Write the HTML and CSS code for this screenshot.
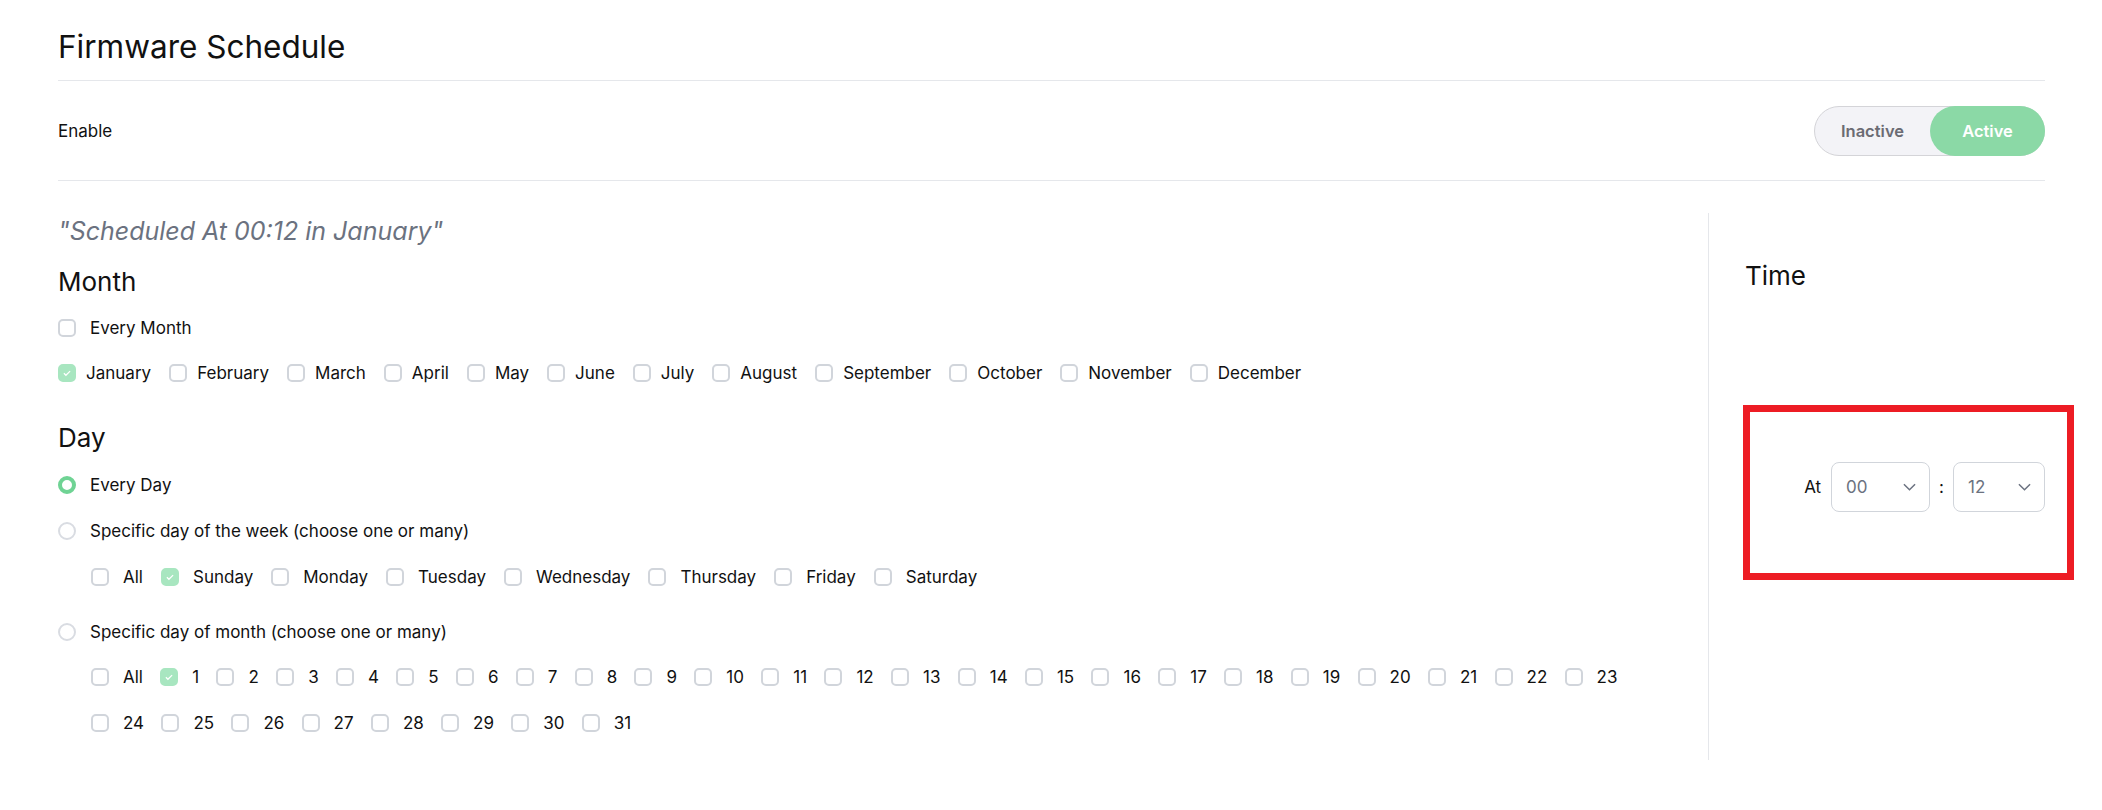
FILE: index.html
```html
<html lang="en">
    <head>
        <title>Firmware Schedule</title>
        <meta charset="UTF-8" />
        <link rel="stylesheet" href="styles.css">
    </head>

    <body>
        <div class="page">
            <header class="page-header">
                <h1>Firmware Schedule</h1>
            </header>

            <div class="enable-row">
                <span>Enable</span>
                <div class="toggle">
                    <span class="toggle-option">Inactive</span>
                    <span class="toggle-option active">Active</span>
                </div>
            </div>

            <div class="schedule">
                <div class="schedule-main">
                    <p class="summary">"Scheduled At 00:12 in January"</p>

                    <h2 class="section-title">Month</h2>
                    <div class="option-row">
                        <label class="check"><span class="box"></span>Every Month</label>
                    </div>
                    <div class="check-list months">
                        <label class="check checked"><span class="box"><svg viewBox="0 0 18 18"><path d="M5 9.3l2.6 2.6L13 6.6"/></svg></span>January</label>
                        <label class="check"><span class="box"></span>February</label>
                        <label class="check"><span class="box"></span>March</label>
                        <label class="check"><span class="box"></span>April</label>
                        <label class="check"><span class="box"></span>May</label>
                        <label class="check"><span class="box"></span>June</label>
                        <label class="check"><span class="box"></span>July</label>
                        <label class="check"><span class="box"></span>August</label>
                        <label class="check"><span class="box"></span>September</label>
                        <label class="check"><span class="box"></span>October</label>
                        <label class="check"><span class="box"></span>November</label>
                        <label class="check"><span class="box"></span>December</label>
                    </div>

                    <h2 class="section-title day-title">Day</h2>
                    <div class="option-row">
                        <label class="radio checked"><span class="dot"></span>Every Day</label>
                    </div>
                    <div class="option-row">
                        <label class="radio"><span class="dot"></span>Specific day of the week (choose one or many)</label>
                    </div>
                    <div class="check-list sub-list">
                        <label class="check"><span class="box"></span>All</label>
                        <label class="check checked"><span class="box"><svg viewBox="0 0 18 18"><path d="M5 9.3l2.6 2.6L13 6.6"/></svg></span>Sunday</label>
                        <label class="check"><span class="box"></span>Monday</label>
                        <label class="check"><span class="box"></span>Tuesday</label>
                        <label class="check"><span class="box"></span>Wednesday</label>
                        <label class="check"><span class="box"></span>Thursday</label>
                        <label class="check"><span class="box"></span>Friday</label>
                        <label class="check"><span class="box"></span>Saturday</label>
                    </div>
                    <div class="option-row month-day-option">
                        <label class="radio"><span class="dot"></span>Specific day of month (choose one or many)</label>
                    </div>
                    <div class="check-list sub-list days">
                        <label class="check"><span class="box"></span>All</label>
                        <label class="check checked"><span class="box"><svg viewBox="0 0 18 18"><path d="M5 9.3l2.6 2.6L13 6.6"/></svg></span>1</label>
                        <label class="check"><span class="box"></span>2</label>
                        <label class="check"><span class="box"></span>3</label>
                        <label class="check"><span class="box"></span>4</label>
                        <label class="check"><span class="box"></span>5</label>
                        <label class="check"><span class="box"></span>6</label>
                        <label class="check"><span class="box"></span>7</label>
                        <label class="check"><span class="box"></span>8</label>
                        <label class="check"><span class="box"></span>9</label>
                        <label class="check"><span class="box"></span>10</label>
                        <label class="check"><span class="box"></span>11</label>
                        <label class="check"><span class="box"></span>12</label>
                        <label class="check"><span class="box"></span>13</label>
                        <label class="check"><span class="box"></span>14</label>
                        <label class="check"><span class="box"></span>15</label>
                        <label class="check"><span class="box"></span>16</label>
                        <label class="check"><span class="box"></span>17</label>
                        <label class="check"><span class="box"></span>18</label>
                        <label class="check"><span class="box"></span>19</label>
                        <label class="check"><span class="box"></span>20</label>
                        <label class="check"><span class="box"></span>21</label>
                        <label class="check"><span class="box"></span>22</label>
                        <label class="check"><span class="box"></span>23</label>
                        <label class="check"><span class="box"></span>24</label>
                        <label class="check"><span class="box"></span>25</label>
                        <label class="check"><span class="box"></span>26</label>
                        <label class="check"><span class="box"></span>27</label>
                        <label class="check"><span class="box"></span>28</label>
                        <label class="check"><span class="box"></span>29</label>
                        <label class="check"><span class="box"></span>30</label>
                        <label class="check"><span class="box"></span>31</label>
                    </div>
                </div>

                <div class="schedule-time">
                    <h2 class="section-title">Time</h2>
                    <div class="time-row">
                        <span class="time-label">At</span>
                        <div class="select hours">
                            <span>00</span>
                            <svg viewBox="0 0 14 8"><path d="M1 1l6 6 6-6"/></svg>
                        </div>
                        <span class="time-sep">:</span>
                        <div class="select minutes">
                            <span>12</span>
                            <svg viewBox="0 0 14 8"><path d="M1 1l6 6 6-6"/></svg>
                        </div>
                        <div class="highlight"></div>
                    </div>
                </div>
            </div>
        </div>
    </body>
</html>
```

FILE: styles.css
```css
html {
    background: #fff;
}

body {
    margin: 0;
    font-family: Inter, "Noto Sans", sans-serif;
    color: #111;
}

.page {
    padding: 0 57px 0 58px;
}

.page-header {
    padding: 27px 0 13px;
    border-bottom: 1px solid #e5e7eb;
}

.page-header h1 {
    margin: 0;
    font-size: 31.5px;
    line-height: 40px;
    font-weight: 400;
}

.enable-row {
    display: flex;
    justify-content: space-between;
    align-items: center;
    height: 99px;
    border-bottom: 1px solid #e5e7eb;
    font-size: 17px;
}

.toggle {
    display: flex;
    width: 231px;
    height: 50px;
    box-sizing: border-box;
    border: 1px solid #d4d4d8;
    border-radius: 25px;
    background: #f3f3f7;
}

.toggle-option {
    flex: 1;
    display: flex;
    align-items: center;
    justify-content: center;
    border-radius: 25px;
    font-size: 16.5px;
    font-weight: 600;
    color: #6b6b73;
}

.toggle-option.active {
    margin: -1px -1px -1px 0;
    background: #8bd9a6;
    color: #fff;
}

.schedule {
    display: grid;
    grid-template-columns: 1fr 337px;
    margin-top: 32px;
}

.schedule-main {
    padding: 2px 60px 25px 0;
}

.summary {
    margin: 0;
    font-size: 25px;
    line-height: 32px;
    font-style: italic;
    color: #6b7280;
}

.section-title {
    margin: 18px 0 0;
    font-size: 26px;
    line-height: 34px;
    font-weight: 400;
}

.day-title {
    margin-top: 36px;
}

.option-row {
    display: flex;
    height: 24px;
    margin-top: 22px;
}

.section-title + .option-row {
    margin-top: 17px;
}

.day-title + .option-row {
    margin-top: 18px;
}

.month-day-option {
    margin-top: 31px;
}

.check-list {
    display: flex;
    flex-wrap: wrap;
    column-gap: 18px;
    row-gap: 21.5px;
    margin-top: 21.5px;
}

.months {
    margin-top: 21px;
}

.days {
    column-gap: 17.3px;
}

.sub-list {
    padding-left: 33px;
}

.check,
.radio {
    display: flex;
    align-items: center;
    gap: 14px;
    height: 24px;
    font-size: 17px;
}

.months .check {
    gap: 10px;
}

.box {
    width: 18px;
    height: 18px;
    box-sizing: border-box;
    border: 2px solid #d1d5db;
    border-radius: 5px;
}

.check.checked .box {
    border-color: #a8e6c0;
    background: #a8e6c0;
}

.box svg {
    display: block;
    width: 14px;
    height: 14px;
    fill: none;
    stroke: #fff;
    stroke-width: 1.6;
}

.dot {
    width: 18px;
    height: 18px;
    box-sizing: border-box;
    border: 2px solid #d9dce2;
    border-radius: 50%;
}

.radio.checked .dot {
    border: 4px solid #6fd394;
}

.schedule-time {
    border-left: 1px solid #e5e7eb;
    padding-left: 36px;
}

.schedule-time .section-title {
    margin-top: 46px;
}

.time-row {
    position: relative;
    display: flex;
    justify-content: flex-end;
    align-items: center;
    margin-top: 169px;
    font-size: 17px;
}

.time-label {
    margin-right: 10px;
}

.time-sep {
    margin: 0 9px;
}

.select {
    display: flex;
    align-items: center;
    justify-content: space-between;
    height: 50px;
    box-sizing: border-box;
    padding: 0 13px 0 14px;
    border: 1px solid #d1d5db;
    border-radius: 8px;
    color: #6b7280;
    font-size: 17px;
}

.select.hours {
    width: 99px;
}

.select.minutes {
    width: 92px;
}

.select svg {
    width: 13px;
    height: 8px;
    fill: none;
    stroke: #6b7280;
    stroke-width: 1.6;
}

.highlight {
    position: absolute;
    left: -2px;
    right: -29px;
    top: -57px;
    bottom: -68px;
    border: 7px solid #ed1c24;
}
```
